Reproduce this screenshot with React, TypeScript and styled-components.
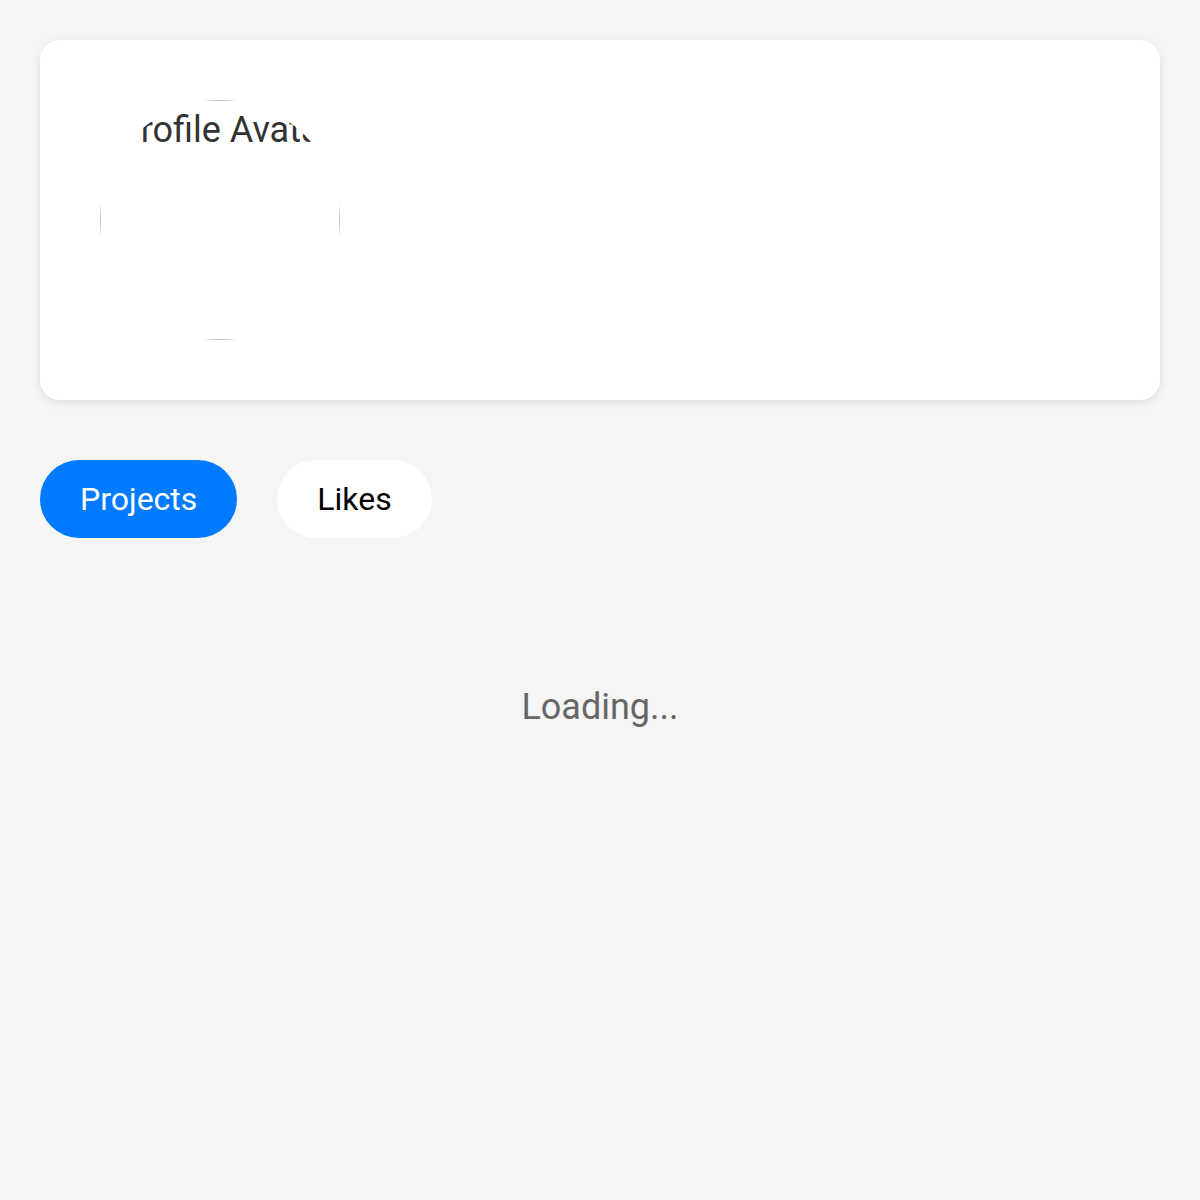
import React, { useState } from 'react';
import styled, { createGlobalStyle } from 'styled-components';

const GlobalStyle = createGlobalStyle`
  html, body {
    margin: 0;
    padding: 0;
    background: #f5f5f5;
    font-family: Roboto, "Noto Sans", sans-serif;
  }
`;

const Page = styled.div`
  padding: 40px;
  min-height: 1200px;
  box-sizing: border-box;
`;

const ProfileCard = styled.section`
  background: #fff;
  border-radius: 20px;
  box-shadow: 0 2px 8px rgba(0, 0, 0, 0.1);
  padding: 60px;
  display: flex;
  align-items: center;
  gap: 40px;
`;

const Avatar = styled.div`
  width: 240px;
  height: 240px;
  border-radius: 50%;
  overflow: hidden;
  background: #fff;
  flex-shrink: 0;
`;

// mimics the broken image frame with its alt text
const AvatarFrame = styled.div`
  width: 100%;
  height: 100%;
  box-sizing: border-box;
  border: 1px solid #bdbdbd;
  padding: 11px 0 0 17px;
  font-size: 36px;
  line-height: 36px;
  color: #333;
  white-space: nowrap;
`;

const Tabs = styled.nav`
  display: flex;
  gap: 40px;
  margin-top: 60px;
`;

const TabButton = styled.button<{ $active?: boolean }>`
  font-family: Roboto, "Noto Sans", sans-serif;
  font-size: 32px;
  line-height: 38px;
  padding: 20px 40px;
  border: none;
  border-radius: 40px;
  cursor: pointer;
  background: ${(p) => (p.$active ? '#007bff' : '#fff')};
  color: ${(p) => (p.$active ? '#fff' : '#000')};
`;

const Loading = styled.div`
  margin-top: 60px;
  padding: 88px 0;
  text-align: center;
  font-size: 36px;
  color: #666;
`;

export default function App() {
  const [tab, setTab] = useState<'projects' | 'likes'>('projects');
  return (
    <>
      <GlobalStyle />
      <Page>
        <ProfileCard>
          <Avatar>
            <AvatarFrame role="img" aria-label="Profile Avatar">Profile Avatar</AvatarFrame>
          </Avatar>
        </ProfileCard>
        <Tabs>
          <TabButton $active={tab === 'projects'} onClick={() => setTab('projects')}>
            Projects
          </TabButton>
          <TabButton $active={tab === 'likes'} onClick={() => setTab('likes')}>
            Likes
          </TabButton>
        </Tabs>
        <Loading>Loading...</Loading>
      </Page>
    </>
  );
}
